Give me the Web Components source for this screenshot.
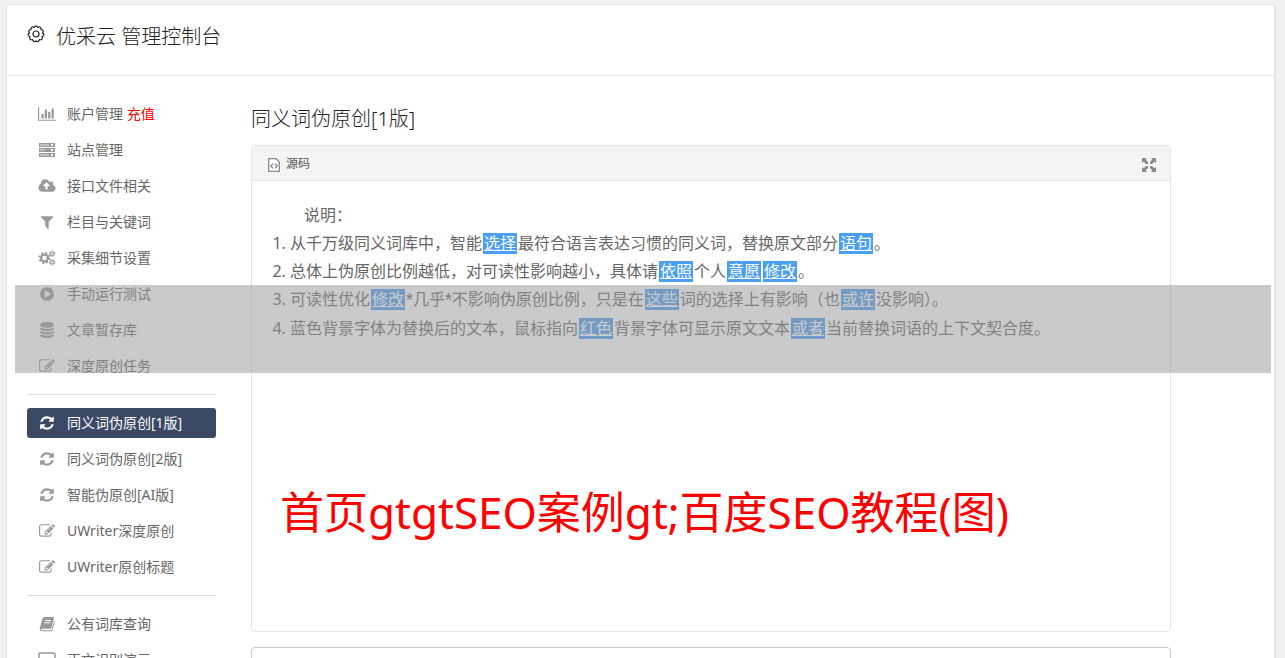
<!DOCTYPE html>
<html lang="zh-CN">
<head>
<meta charset="utf-8">
<title>优采云 管理控制台</title>
<style>
html { scrollbar-width: none; background: #f1f1f1; }
body { margin: 0; font-family: "Noto Sans", "Noto Sans CJK SC", sans-serif; font-size: 14px; color: #666; }
</style>
</head>
<body>
<console-app></console-app>

<script>
const ICONS = {
  chart: ['0 0 2048 1792', '<path d="M640 896v512H384V896h256zm384-512v1024H768V384h256zm1024 1152v128H0V128h128v1408h1920zm-640-896v768h-256V640h256zm384-384v1152h-256V256h256z"/>'],
  server: ['0 0 18 16', '<path fill-rule="evenodd" d="M1 1h16v4H1zM2 2v2h9V2zM13 2v2h2V2zM1 6h16v4H1zM2 7v2h5V7zM13 7v2h2V7zM1 11h16v4H1zM2 12v2h9v-2zM13 12v2h2v-2z"/><path opacity=".6" d="M2 2h9v2H2zM2 7h9v2H2zM2 12h9v2H2z"/>'],
  cloud: ['0 0 1920 1792', '<path d="M1280 864q0-14-9-23l-352-352q-9-9-23-9t-23 9l-351 351q-10 12-10 24 0 14 9 23t23 9h224v352q0 13 9.500 22.500t22.500 9.500h192q13 0 22.500-9.500t9.500-22.500v-352h224q13 0 22.500-9.500t9.500-22.500zm640 288q0 159-112.500 271.500t-271.500 112.500h-1088q-185 0-316.500-131.500t-131.500-316.500q0-130 70-240t188-165q-2-30-2-43 0-212 150-362t362-150q156 0 285.500 87t188.500 231q71-62 166-62 106 0 181 75t75 181q0 76-41 138 130 31 213.500 135.500t83.500 238.500z"/>'],
  filter: ['0 0 1792 1792', '<path d="M1595 295q17 41-14 70l-493 493v742q0 42-39 59-13 5-25 5-27 0-45-19l-256-256q-19-19-19-45v-486l-493-493q-31-29-14-70 17-39 59-39h1280q42 0 59 39z"/>'],
  gears: ['0 0 18 16', '<g fill="none" stroke="currentColor"><circle cx="6.500" cy="8" r="3.400" stroke-width="2.200"/><circle cx="6.500" cy="8" r="5.100" stroke-width="1.800" stroke-dasharray="2 2.005"/><circle cx="14.200" cy="3.700" r="1.700" stroke-width="1.200"/><circle cx="14.200" cy="3.700" r="2.700" stroke-width="1" stroke-dasharray="1.200 .92"/><circle cx="14.200" cy="12.300" r="1.700" stroke-width="1.200"/><circle cx="14.200" cy="12.300" r="2.700" stroke-width="1" stroke-dasharray="1.200 .92"/></g>'],
  play: ['0 0 1792 1792', '<path d="M896 128q209 0 385.500 103t279.500 279.500 103 385.500-103 385.500-279.500 279.500-385.500 103-385.500-103-279.500-279.500-103-385.500 103-385.500 279.500-279.500 385.500-103zm384 823q32-18 32-55t-32-55l-544-320q-31-19-64-1-32 19-32 56v640q0 37 32 56 16 8 32 8 17 0 32-9z"/>'],
  database: ['0 0 1792 1792', '<path d="M896 768q237 0 443-43t325-127v170q0 69-103 128t-280 93.500-385 34.500-385-34.500-280-93.500-103-128v-170q119 84 325 127t443 43zm0 768q237 0 443-43t325-127v170q0 69-103 128t-280 93.500-385 34.500-385-34.500-280-93.500-103-128v-170q119 84 325 127t443 43zm0-384q237 0 443-43t325-127v170q0 69-103 128t-280 93.500-385 34.500-385-34.500-280-93.500-103-128v-170q119 84 325 127t443 43zm0-1152q208 0 385 34.500t280 93.500 103 128v128q0 69-103 128t-280 93.500-385 34.500-385-34.500-280-93.500-103-128v-128q0-69 103-128t280-93.500 385-34.500z"/>'],
  edit: ['0 0 1792 1792', '<path d="M888 1184l116-116-152-152-116 116v56h96v96h56zm440-720q-16-16-33 1l-350 350q-17 17-1 33t33-1l350-350q17-17 1-33zm80 594v190q0 119-84.500 203.500t-203.500 84.500h-832q-119 0-203.500-84.500t-84.500-203.500v-832q0-119 84.500-203.500t203.500-84.500h832q63 0 117 25 15 7 18 23 3 17-9 29l-49 49q-14 14-32 8-23-6-45-6h-832q-66 0-113 47t-47 113v832q0 66 47 113t113 47h832q66 0 113-47t47-113v-126q0-13 9-22l64-64q15-15 35-7t20 29zm-96-738l288 288-672 672h-288v-288zm444 132l-92 92-288-288 92-92q28-28 68-28t68 28l152 152q28 28 28 68t-28 68z"/>'],
  refresh: ['0 0 1792 1792', '<path d="M1639 1056q0 5-1 7-64 268-268 434.500t-478 166.500q-146 0-282.500-55t-243.500-157l-129 129q-19 19-45 19t-45-19-19-45v-448q0-26 19-45t45-19h448q26 0 45 19t19 45-19 45l-137 137q71 66 161 102t187 36q134 0 250-65t186-179q11-17 53-117 8-23 30-23h192q13 0 22.500 9.500t9.500 22.500zm25-800v448q0 26-19 45t-45 19h-448q-26 0-45-19t-19-45 19-45l138-138q-148-137-349-137-134 0-250 65t-186 179q-11 17-53 117-8 23-30 23h-199q-13 0-22.500-9.500t-9.500-22.500v-7q65-268 270-434.500t480-166.500q146 0 284 55.500t245 156.500l130-129q19-19 45-19t45 19 19 45z"/>'],
  book: ['0 0 16 16', '<path fill-rule="evenodd" d="M5.300 1H14q1.300.2 1 1.600l-2.500 9q-.3 1.200-1.600 1.200H3q-.8 0-.6.7.2.7 1.300.7h8.200q.5 0 .8-.7L15.200 5q.9.500.6 1.500L13.500 14q-.4 1.200-1.600 1.200H3.300Q1.300 15 .8 13.200q-.2-.8.100-1.500L3.500 2.800Q4 1 5.300 1zM6.200 4l-.3.900h6l.3-.9zM5.500 6.300l-.3.900h6l.3-.9z"/>'],
  laptop: ['0 0 18 16', '<path fill="none" stroke="currentColor" stroke-width="1.500" d="M2 1h14q1 0 1 1v9q0 1-1 1H2q-1 0-1-1V2q0-1 1-1z"/><path d="M5 14h8v2H5z"/>'],
  cog: ['0 0 18 18', '<g fill="none" stroke="currentColor" stroke-width="1.200" stroke-linejoin="round"><circle cx="9" cy="9" r="3"/><path d="M9 .9Q10 .9 10.700 2.400 12 1.500 13.300 2.200 14.300 2.900 14 4.400 15.600 4.500 16.200 5.900 16.500 7 15.400 8.100 17.100 8.900 16.900 10.200 16.600 11.400 15.100 11.700 15.800 13.200 14.800 14.300 13.900 15.100 12.500 14.500 12.100 16.100 10.800 16.700 9.600 17 9 15.700 8.400 17 7.200 16.700 5.900 16.100 5.500 14.500 4.100 15.100 3.200 14.300 2.200 13.200 2.900 11.700 1.400 11.400 1.100 10.200.9 8.900 2.600 8.100 1.500 7 1.800 5.900 2.400 4.500 4 4.400 3.700 2.900 4.700 2.200 6 1.500 7.300 2.400 8 .9 9 .9z"/></g>'],
  source: ['0 0 12 14', '<path fill="#fff" stroke="currentColor" stroke-width="1.300" d="M.7.700H8L11.300 4v9.300H.7z"/><path fill="none" stroke="currentColor" stroke-width="1.300" d="M5 5.800 2.800 8 5 10.200M7 5.800 9.200 8 7 10.200"/>'],
  expand: ['0 0 14 14', '<path d="M0 0h5L3.500 1.500 6 4v2H4L1.500 3.500 0 5zM14 0v5l-1.500-1.500L10 6H8V4l2.500-2.500L9 0zM0 14V9l1.500 1.500L4 8h2v2l-2.500 2.500L5 14zM14 14H9l1.500-1.500L8 10V8h2l2.500 2.500L14 9z"/>']
};

/* Small base: each element renders its markup into an open shadow root. */
class Base extends HTMLElement {
  connectedCallback() {
    if (!this.shadowRoot) this.attachShadow({ mode: 'open' }).innerHTML = this.render();
  }
}

customElements.define('ui-icon', class extends Base {
  render() {
    const [box, body] = ICONS[this.getAttribute('name')];
    return `<style>
      :host { display: inline-flex; width: 18px; height: 16px; flex: none; }
      svg { width: 100%; height: 100%; fill: currentColor; }
    </style><svg viewBox="${box}" aria-hidden="true">${body}</svg>`;
  }
});

customElements.define('nav-item', class extends Base {
  render() {
    return `<style>
      :host { display: block; }
      a { display: flex; align-items: center; gap: 11px; height: 30px; padding-left: 11px;
          border-radius: 3px; color: #666; text-decoration: none; line-height: 30px; white-space: nowrap; }
      ui-icon { color: #999; }
      :host([active]) a { background: #3a4a66; color: #fff; }
      :host([active]) ui-icon { color: #fff; }
      ::slotted(em) { color: #f00; font-style: normal; }
    </style>
    <a href="#"><ui-icon name="${this.getAttribute('icon')}"></ui-icon><span><slot></slot></span></a>`;
  }
});

customElements.define('side-nav', class extends Base {
  render() {
    return `<style>
      :host { display: block; flex: none; width: 189px; }
      nav { display: flex; flex-direction: column; gap: 6px; }
      hr { width: 100%; margin: 7px 0; border: 0; border-top: 1px solid #ddd; }
      em { color: #f00; font-style: normal; }
    </style>
    <nav>
      <nav-item icon="chart">账户管理 <em>充值</em></nav-item>
      <nav-item icon="server">站点管理</nav-item>
      <nav-item icon="cloud">接口文件相关</nav-item>
      <nav-item icon="filter">栏目与关键词</nav-item>
      <nav-item icon="gears">采集细节设置</nav-item>
      <nav-item icon="play">手动运行测试</nav-item>
      <nav-item icon="database">文章暂存库</nav-item>
      <nav-item icon="edit">深度原创任务</nav-item>
      <hr>
      <nav-item icon="refresh" active>同义词伪原创[1版]</nav-item>
      <nav-item icon="refresh">同义词伪原创[2版]</nav-item>
      <nav-item icon="refresh">智能伪原创[AI版]</nav-item>
      <nav-item icon="edit">UWriter深度原创</nav-item>
      <nav-item icon="edit">UWriter原创标题</nav-item>
      <hr>
      <nav-item icon="book">公有词库查询</nav-item>
      <nav-item icon="laptop">正文识别演示</nav-item>
    </nav>`;
  }
});

customElements.define('syn-word', class extends Base {
  render() {
    return `<style>
      :host { display: inline-block; margin: 0 1px; padding: 0 1px; background: #499ef5; color: #fff;
              line-height: 21px; text-decoration: underline; }
    </style><slot></slot>`;
  }
});

customElements.define('rich-editor', class extends Base {
  render() {
    return `<style>
      :host { display: block; border: 1px solid #e5e5e5; border-radius: 4px; background: #fff; }
      .bar { display: flex; align-items: center; justify-content: space-between; height: 34px;
             padding: 0 14px 0 15px; background: #f4f4f4; border-bottom: 1px solid #e5e5e5; border-radius: 3px 3px 0 0; }
      button { display: flex; align-items: center; gap: 5px; margin: 0; padding: 2px 0 0; border: 0; background: none;
               font: inherit; font-size: 12px; line-height: 20px; color: #555; }
      ui-icon { width: 14px; height: 14px; margin-top: 2px; color: #888; }
      .body { min-height: 410px; padding: 20px; font-size: 16px; line-height: 28px; }
    </style>
    <div class="bar">
      <button type="button"><ui-icon name="source"></ui-icon>源码</button>
      <button type="button" aria-label="全屏"><ui-icon name="expand"></ui-icon></button>
    </div>
    <div class="body"><slot></slot></div>`;
  }
});

customElements.define('page-header', class extends Base {
  render() {
    return `<style>
      :host { display: flex; align-items: flex-start; gap: 11px; height: 54px; padding: 16px 20px 0; border-bottom: 1px solid #e5e5e5; color: #222; }
      ui-icon { width: 18px; height: 18px; margin-top: 4px; }
      h1 { margin: 0; font-size: 20px; font-weight: 300; line-height: 32px; }
    </style>
    <ui-icon name="cog"></ui-icon><h1><slot></slot></h1>`;
  }
});

customElements.define('console-app', class extends Base {
  render() {
    return `<style>
      :host { display: block; position: relative; padding: 4px 9px 0 6px; }
      .sheet { border: 1px solid #e5e5e5; border-right-width: 2px; border-radius: 4px; background: #fff; }
      .columns { display: flex; gap: 35px; padding: 23px 20px; }
      main { flex: 1; min-width: 0; max-width: 920px; }
      h2 { margin: 4px 0 10px; font-size: 20px; font-weight: 300; line-height: 32px; color: #222; }
      p, ol { margin: 0; }
      p { text-indent: 2em; }
      ol { padding-left: 18px; }
      .star { font-family: Roboto, sans-serif; }
      .result { height: 120px; margin-top: 15px; border: 1px solid #ccc; border-radius: 4px; }
      .band { position: absolute; top: 285px; left: 15px; right: 14px; height: 88px; background: rgba(153, 153, 153, .52); pointer-events: none; }
      .caption { position: absolute; top: 480px; left: 280px; font-size: 44px; line-height: 64px; color: #f00; white-space: nowrap; }
    </style>
    <div class="sheet">
      <page-header>优采云 管理控制台</page-header>
      <div class="columns">
        <side-nav></side-nav>
        <main>
          <h2>同义词伪原创[1版]</h2>
          <rich-editor>
            <p>说明：</p>
            <ol>
              <li>从千万级同义词库中，智能<syn-word>选择</syn-word>最符合语言表达习惯的同义词，替换原文部分<syn-word>语句</syn-word>。</li>
              <li>总体上伪原创比例越低，对可读性影响越小，具体请<syn-word>依照</syn-word>个人<syn-word>意愿</syn-word><syn-word>修改</syn-word>。</li>
              <li>可读性优化<syn-word>修改</syn-word><span class="star">*</span>几乎<span class="star">*</span>不影响伪原创比例，只是在<syn-word>这些</syn-word>词的选择上有影响（也<syn-word>或许</syn-word>没影响）。</li>
              <li>蓝色背景字体为替换后的文本，鼠标指向<syn-word>红色</syn-word>背景字体可显示原文文本<syn-word>或者</syn-word>当前替换词语的上下文契合度。</li>
            </ol>
          </rich-editor>
          <div class="result"></div>
        </main>
      </div>
    </div>
    <div class="band"></div>
    <div class="caption">首页gtgtSEO案例gt;百度SEO教程(图)</div>`;
  }
});
</script>
</body>
</html>
